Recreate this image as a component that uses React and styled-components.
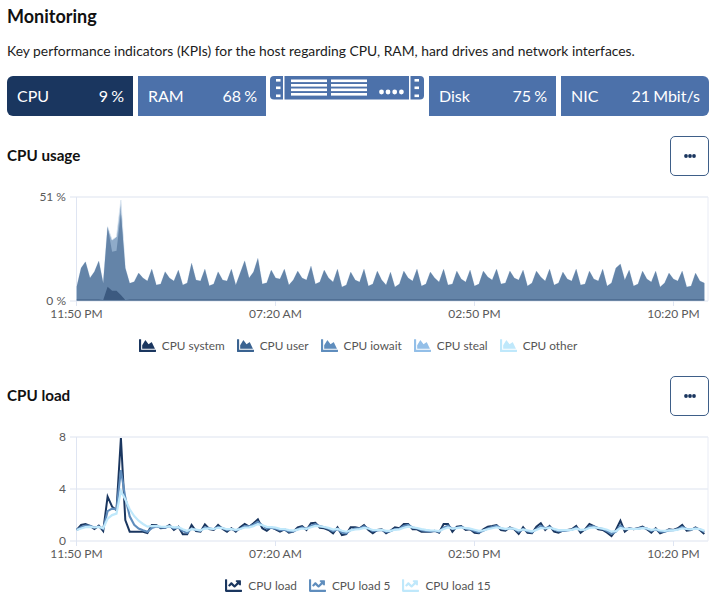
import React from 'react';
import styled, { createGlobalStyle } from 'styled-components';
import { FaChartArea, FaChartLine } from 'react-icons/fa';

const GlobalStyle = createGlobalStyle`
    html, body {
        margin: 0;
        background: #fff;
        font-family: "Lato", "Liberation Sans", sans-serif;
        color: #111;
    }
`

const Page = styled.div`
    width: 702px;
    padding: 5px 7px 0;
`

const Title = styled.h1`
    margin: 0;
    font-size: 18px;
    line-height: 22px;
    font-weight: 700;
`

const Intro = styled.p`
    margin: 14px 0 15px;
    font-size: 13.85px;
    line-height: 20px;
    color: #1c1c1c;
`

const KpiRow = styled.div`
    display: flex;
    gap: 5px;
    align-items: flex-start;
`

const Kpi = styled.div`
    width: ${({ $width }) => $width}px;
    height: 40px;
    box-sizing: border-box;
    padding: 0 9px 2px 10px;
    display: flex;
    justify-content: space-between;
    align-items: center;
    font-size: 16px;
    word-spacing: -1px;
    color: #fff;
    background: ${({ $active }) => $active ? '#1a365f' : '#4c71aa'};
    border-radius: ${({ $round }) => $round === 'left' ? '6px 0 0 6px' : $round === 'right' ? '0 6px 6px 0' : '0'};
`

const ServerIcon = styled.svg`
    display: block;
    width: 154px;
    height: 24px;
    margin: 0 0 0 -1px;
`

const SectionHead = styled.div`
    display: flex;
    justify-content: space-between;
    align-items: center;
    height: 40px;
    margin-top: ${({ $top }) => $top}px;
`

const SectionTitle = styled.h2`
    margin: 0 0 2px;
    font-size: 15.2px;
    font-weight: 700;
`

const MenuButton = styled.button`
    width: 39px;
    height: 40px;
    padding: 0;
    display: flex;
    align-items: center;
    justify-content: center;
    background: #fff;
    border: 1.5px solid #3e5e88;
    border-radius: 5px;
`

const ChartSvg = styled.svg`
    display: block;
    width: 702px;
    height: 135px;
    margin-top: 14px;

    text {
        font-family: "Lato", "Liberation Sans", sans-serif;
        font-size: 12px;
        fill: #5a5a5a;
    }
`

const Legend = styled.div`
    display: flex;
    justify-content: center;
    gap: 12px;
    margin-top: 11px;
    height: 18px;
`

const LegendItem = styled.div`
    display: flex;
    align-items: center;
    gap: 6px;
    font-size: 11.8px;
    color: #555;

    svg {
        color: ${({ $color }) => $color};
        width: 17px;
        height: 17px;
    }
`

const COLORS = {
    system: '#1a365f',
    user: '#3a6391',
    iowait: '#5f8dbd',
    steal: '#93bfe8',
    other: '#bfe8fb',
}

const USAGE = [
    286.7, 268, 261.7, 278, 271.7, 261, 283, 226.7, 240, 236.7, 200, 268, 283.3, 281.7, 273, 278, 281, 269, 285, 284,
    271.7, 278, 281, 270, 285, 283, 263, 280, 281, 269, 285.7, 284, 271.7, 280, 281, 269, 285, 273, 260.7, 278, 272, 258.3,
    284, 282.7, 270, 278, 279, 269, 285, 280, 271, 278, 280, 266, 284, 282, 270, 278, 282, 269, 287, 285, 272, 280, 282,
    269, 286, 284, 271, 280, 285, 272, 287, 284, 271, 278, 281, 269, 286, 284, 272, 278, 282, 269, 285, 284, 271, 279, 282,
    270, 286, 284, 271, 277, 280, 269, 284, 283, 271, 278, 280, 270, 286, 283, 271, 277, 281, 269, 285, 283, 272, 279, 281,
    269, 285, 284, 271, 279, 281, 269, 286, 283, 268, 264, 280, 270, 286, 284, 271, 279, 282, 271, 287, 283, 273, 279, 281,
    271, 287, 286, 273, 281, 283,
]

const LOAD_HEAD = [
    530, 525, 524, 526, 529, 525.7, 531, 496.7, 506.7, 510, 438, 520, 531.7, 531.7, 531.7, 531.7, 533, 525, 525, 528.3,
    527.7, 525, 530, 526.7, 534.3, 534.3, 525, 531, 531.7, 524.3, 529, 530, 525, 529, 531.7,
]

// read off the plot, in 1/3 px above y = 480
const LOAD_TAIL = [
    145, 155, 142, 132, 140, 130, 118, 145, 152, 142, 148, 155, 148, 158, 155, 142, 138, 150, 130, 128, 143, 145, 150, 160,
    142, 165, 162, 142, 142, 145, 135, 150, 160, 150, 148, 160, 152, 142, 145, 132, 132, 148, 148, 155, 155, 155, 152, 158,
    132, 132, 155, 140, 138, 150, 148, 158, 160, 148, 140, 138, 135, 150, 152, 142, 148, 162, 142, 158, 160, 140, 130, 150,
    138, 155, 158, 152, 150, 148, 138, 158, 148, 132, 138, 148, 150, 158, 168, 150, 122, 155, 145, 148, 145, 140, 148, 158,
    145, 160, 155, 148, 150, 145, 135, 152, 150, 142, 150, 162,
]

const LOAD = [...LOAD_HEAD, ...LOAD_TAIL.map(v => 480 + v / 3)]

const START = 76.7
const STEP = 4.42
const xAt = i => (START + i * STEP).toFixed(1)

const smooth = (values, a) => {
    let last = values[0];
    return values.map(v => {
        last = last + a * (v - last);
        return last;
    })
}

const linePath = values => values.map((y, i) => `${i === 0 ? 'M' : 'L'}${xAt(i)} ${y.toFixed(1)}`).join(' ')
const areaPath = (values, base) => `${linePath(values)} L${xAt(values.length - 1)} ${base} L${xAt(0)} ${base} Z`

const TICKS = [
    { x: 76.5, label: '11:50 PM' },
    { x: 275.5, label: '07:20 AM' },
    { x: 474.5, label: '02:50 PM' },
    { x: 673.5, label: '10:20 PM' },
]

function Axes({ top, bottom, rows }) {
    return (
        <g>
            {rows.map(r => (
                <g key={r.label}>
                    <line x1="70" x2="708" y1={r.y} y2={r.y} stroke="#e9ecf5" strokeWidth="1.4" />
                    <text x="66" y={r.y + 3.5} textAnchor="end">{r.label}</text>
                </g>
            ))}
            <line x1="708" x2="708" y1={top} y2={bottom} stroke="#e9ecf5" />
            {TICKS.map(t => (
                <g key={t.label}>
                    <line x1={t.x} x2={t.x} y1={t.x === 76.5 ? top : bottom} y2={bottom + 5} stroke="#dfe5f2" />
                    <text x={t.x} y={bottom + 17} textAnchor="middle">{t.label}</text>
                </g>
            ))}
        </g>
    )
}

function UsageChart() {
    const base = 300.5;
    const user = USAGE.map((y, i) => {
        if (i === 8) return 251.7;
        if (i === 9) return 250.7;
        if (i === 10) return 213;
        return y;
    })
    const system = USAGE.map((_, i) => {
        const bump = { 6: 300, 7: 286.7, 8: 290.7, 9: 290.7, 10: 295, 11: 300 };
        return bump[i] || 299.6;
    })
    return (
        <ChartSvg viewBox="7 190 702 135">
            <Axes top={197} bottom={301} rows={[{ y: 197, label: '51 %' }, { y: 301, label: '0 %' }]} />
            <path d={areaPath(USAGE, base)} fill="#8fabc9" stroke="#dbe6f1" strokeWidth="0.8" />
            <path d={areaPath(user, base)} fill="#6484a8" />
            <path d={areaPath(system, base)} fill="#3c5a80" />
        </ChartSvg>
    )
}

function LoadChart() {
    const load5 = smooth(LOAD, 0.55);
    const load15 = smooth(LOAD, 0.3);
    return (
        <ChartSvg viewBox="7 430 702 135">
            <Axes top={437} bottom={541} rows={[{ y: 437, label: '8' }, { y: 489, label: '4' }, { y: 541, label: '0' }]} />
            <path d={linePath(LOAD)} fill="none" stroke={COLORS.system} strokeWidth="2" />
            <path d={linePath(load5)} fill="none" stroke={COLORS.iowait} strokeWidth="2.1" />
            <path d={linePath(load15)} fill="none" stroke={COLORS.other} strokeWidth="2.2" />
        </ChartSvg>
    )
}

function Server() {
    const color = '#4c71aa';
    const slots = [3, 10.5, 18.5];
    const bars = [3.5, 8, 12.5, 17];
    return (
        <ServerIcon viewBox="0 0 154 24">
            <path d="M4 0 H13 V23.5 H4 a4 4 0 0 1 -4 -4 V4 a4 4 0 0 1 4 -4 Z" fill={color} />
            <rect x="14.5" y="0" width="124.5" height="23.5" fill={color} />
            <path d="M140.5 0 H150 a4 4 0 0 1 4 4 V19.5 a4 4 0 0 1 -4 4 H140.5 Z" fill={color} />
            {slots.map(y => (
                <g key={y} fill="#fff">
                    <rect x="6" y={y} width="4.5" height="2.6" />
                    <rect x="144.5" y={y} width="4.5" height="2.6" />
                </g>
            ))}
            {bars.map(y => (
                <g key={y} fill="#fff">
                    <rect x="21" y={y} width="36" height="2.6" />
                    <rect x="61" y={y} width="36" height="2.6" />
                </g>
            ))}
            {[111.5, 118, 124.7, 131.4].map(x => (
                <circle key={x} cx={x} cy="16" r="2.4" fill="#fff" />
            ))}
        </ServerIcon>
    )
}

function Dots() {
    return (
        <svg width="12" height="4" viewBox="0 0 12 4">
            <circle cx="2" cy="2" r="1.9" fill="#1a365f" />
            <circle cx="6" cy="2" r="1.9" fill="#1a365f" />
            <circle cx="10" cy="2" r="1.9" fill="#1a365f" />
        </svg>
    )
}

const AREA_LEGEND = [
    ['CPU system', COLORS.system],
    ['CPU user', COLORS.user],
    ['CPU iowait', COLORS.iowait],
    ['CPU steal', COLORS.steal],
    ['CPU other', COLORS.other],
]

const LINE_LEGEND = [
    ['CPU load', COLORS.system],
    ['CPU load 5', COLORS.iowait],
    ['CPU load 15', COLORS.other],
]

function App() {
    return (
        <Page>
            <GlobalStyle />
            <Title>Monitoring</Title>
            <Intro>Key performance indicators (KPIs) for the host regarding CPU, RAM, hard drives and network interfaces.</Intro>
            <KpiRow>
                <Kpi $width={126} $active $round="left"><span>CPU</span><span>9 %</span></Kpi>
                <Kpi $width={128}><span>RAM</span><span>68 %</span></Kpi>
                <Server />
                <Kpi $width={127}><span>Disk</span><span>75 %</span></Kpi>
                <Kpi $width={148} $round="right"><span>NIC</span><span>21 Mbit/s</span></Kpi>
            </KpiRow>
            <SectionHead $top={20}>
                <SectionTitle>CPU usage</SectionTitle>
                <MenuButton><Dots /></MenuButton>
            </SectionHead>
            <UsageChart />
            <Legend>
                {AREA_LEGEND.map(([label, color]) => (
                    <LegendItem key={label} $color={color}><FaChartArea />{label}</LegendItem>
                ))}
            </Legend>
            <SectionHead $top={22}>
                <SectionTitle>CPU load</SectionTitle>
                <MenuButton><Dots /></MenuButton>
            </SectionHead>
            <LoadChart />
            <Legend>
                {LINE_LEGEND.map(([label, color]) => (
                    <LegendItem key={label} $color={color}><FaChartLine />{label}</LegendItem>
                ))}
            </Legend>
        </Page>
    )
}

export default App;
